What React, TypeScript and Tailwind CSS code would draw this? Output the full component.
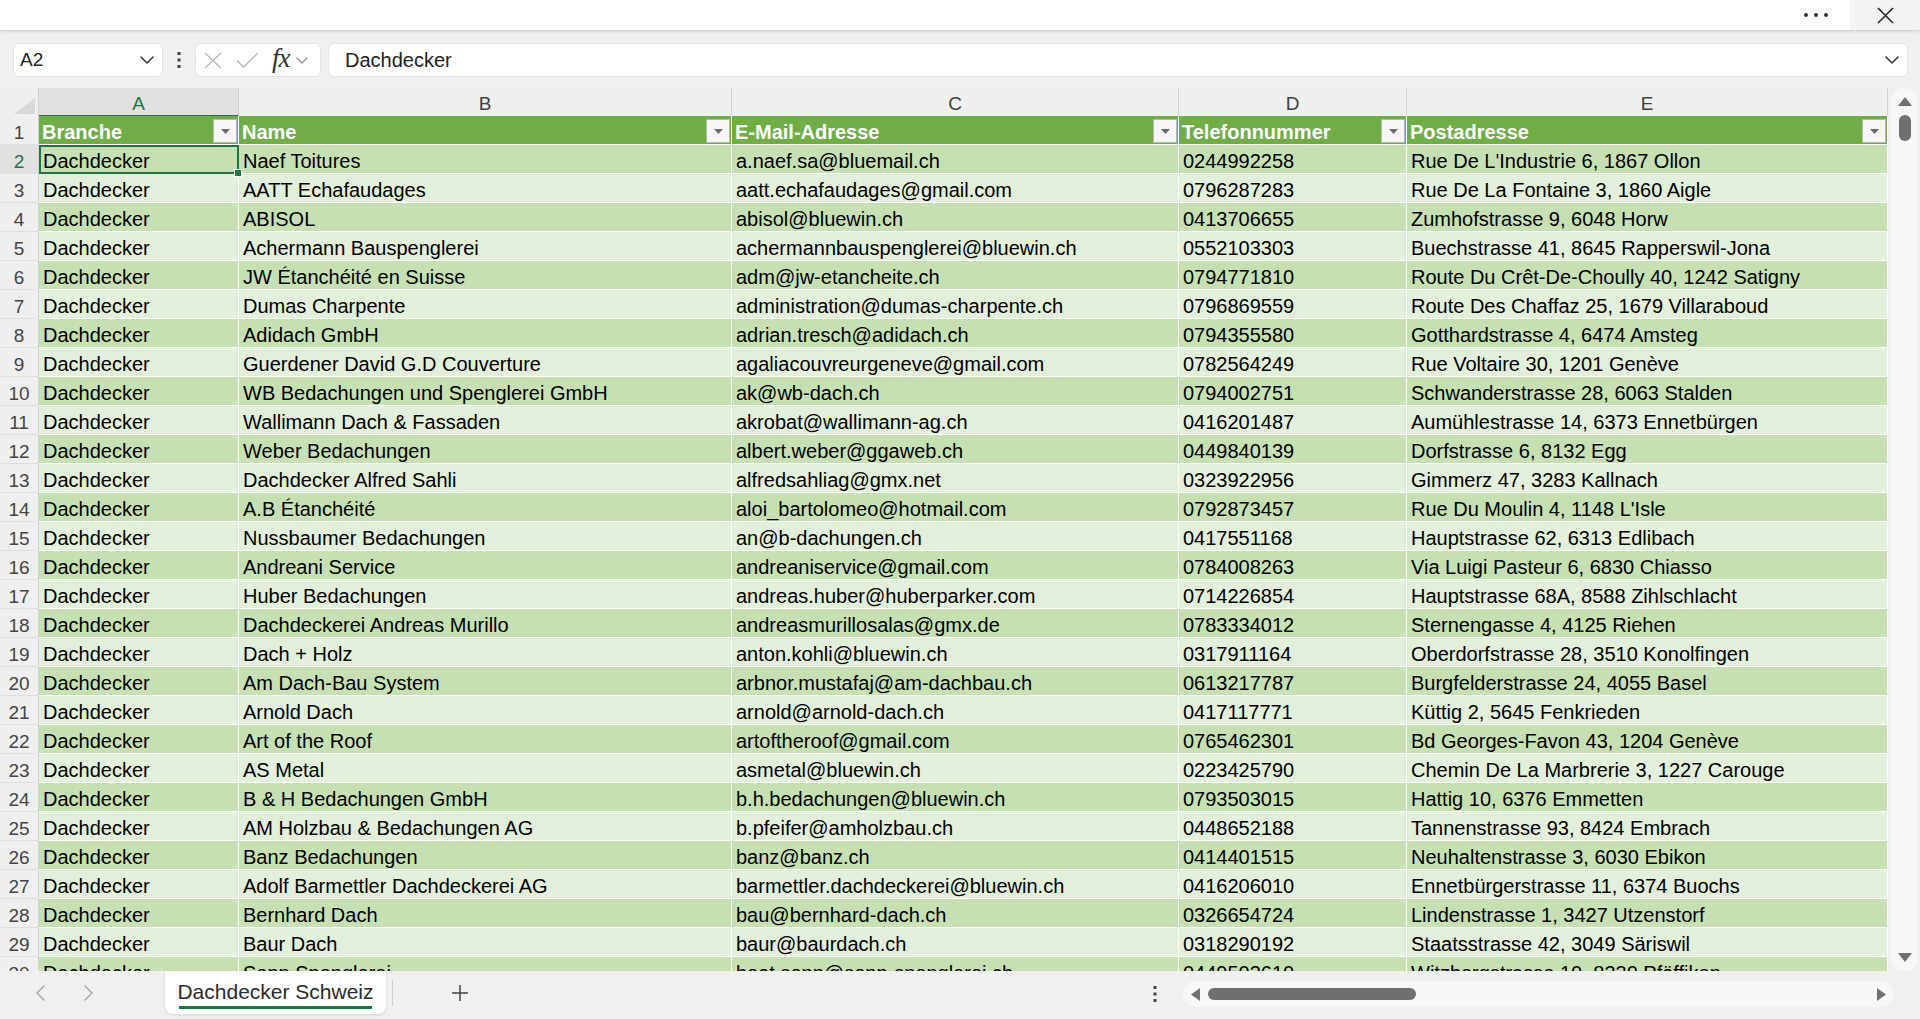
import React from "react";

type Entry = [string, string, string, string];

const ENTRIES: Entry[] = [
  ["Naef Toitures", "a.naef.sa@bluemail.ch", "0244992258", "Rue De L'Industrie 6, 1867 Ollon"],
  ["AATT Echafaudages", "aatt.echafaudages@gmail.com", "0796287283", "Rue De La Fontaine 3, 1860 Aigle"],
  ["ABISOL", "abisol@bluewin.ch", "0413706655", "Zumhofstrasse 9, 6048 Horw"],
  ["Achermann Bauspenglerei", "achermannbauspenglerei@bluewin.ch", "0552103303", "Buechstrasse 41, 8645 Rapperswil-Jona"],
  ["JW Étanchéité en Suisse", "adm@jw-etancheite.ch", "0794771810", "Route Du Crêt-De-Choully 40, 1242 Satigny"],
  ["Dumas Charpente", "administration@dumas-charpente.ch", "0796869559", "Route Des Chaffaz 25, 1679 Villaraboud"],
  ["Adidach GmbH", "adrian.tresch@adidach.ch", "0794355580", "Gotthardstrasse 4, 6474 Amsteg"],
  ["Guerdener David G.D Couverture", "agaliacouvreurgeneve@gmail.com", "0782564249", "Rue Voltaire 30, 1201 Genève"],
  ["WB Bedachungen und Spenglerei GmbH", "ak@wb-dach.ch", "0794002751", "Schwanderstrasse 28, 6063 Stalden"],
  ["Wallimann Dach & Fassaden", "akrobat@wallimann-ag.ch", "0416201487", "Aumühlestrasse 14, 6373 Ennetbürgen"],
  ["Weber Bedachungen", "albert.weber@ggaweb.ch", "0449840139", "Dorfstrasse 6, 8132 Egg"],
  ["Dachdecker Alfred Sahli", "alfredsahliag@gmx.net", "0323922956", "Gimmerz 47, 3283 Kallnach"],
  ["A.B Étanchéité", "aloi_bartolomeo@hotmail.com", "0792873457", "Rue Du Moulin 4, 1148 L'Isle"],
  ["Nussbaumer Bedachungen", "an@b-dachungen.ch", "0417551168", "Hauptstrasse 62, 6313 Edlibach"],
  ["Andreani Service", "andreaniservice@gmail.com", "0784008263", "Via Luigi Pasteur 6, 6830 Chiasso"],
  ["Huber Bedachungen", "andreas.huber@huberparker.com", "0714226854", "Hauptstrasse 68A, 8588 Zihlschlacht"],
  ["Dachdeckerei Andreas Murillo", "andreasmurillosalas@gmx.de", "0783334012", "Sternengasse 4, 4125 Riehen"],
  ["Dach + Holz", "anton.kohli@bluewin.ch", "0317911164", "Oberdorfstrasse 28, 3510 Konolfingen"],
  ["Am Dach-Bau System", "arbnor.mustafaj@am-dachbau.ch", "0613217787", "Burgfelderstrasse 24, 4055 Basel"],
  ["Arnold Dach", "arnold@arnold-dach.ch", "0417117771", "Küttig 2, 5645 Fenkrieden"],
  ["Art of the Roof", "artoftheroof@gmail.com", "0765462301", "Bd Georges-Favon 43, 1204 Genève"],
  ["AS Metal", "asmetal@bluewin.ch", "0223425790", "Chemin De La Marbrerie 3, 1227 Carouge"],
  ["B & H Bedachungen GmbH", "b.h.bedachungen@bluewin.ch", "0793503015", "Hattig 10, 6376 Emmetten"],
  ["AM Holzbau & Bedachungen AG", "b.pfeifer@amholzbau.ch", "0448652188", "Tannenstrasse 93, 8424 Embrach"],
  ["Banz Bedachungen", "banz@banz.ch", "0414401515", "Neuhaltenstrasse 3, 6030 Ebikon"],
  ["Adolf Barmettler Dachdeckerei AG", "barmettler.dachdeckerei@bluewin.ch", "0416206010", "Ennetbürgerstrasse 11, 6374 Buochs"],
  ["Bernhard Dach", "bau@bernhard-dach.ch", "0326654724", "Lindenstrasse 1, 3427 Utzenstorf"],
  ["Baur Dach", "baur@baurdach.ch", "0318290192", "Staatsstrasse 42, 3049 Säriswil"],
  ["Sepp Spenglerei", "beat.sepp@sepp-spenglerei.ch", "0449503610", "Witzbergstrasse 10, 8330 Pfäffikon"],
];

const COLS = "grid grid-cols-[39px_200px_493px_447px_228px_481px]";

function Chevron({ w = 14, h = 8, color = "#333" }: { w?: number; h?: number; color?: string }) {
  return (
    <svg width={w} height={h} viewBox={`0 0 ${w} ${h}`} fill="none">
      <path d={`M1 1L${w / 2} ${h - 1}L${w - 1} 1`} stroke={color} strokeWidth="1.5" strokeLinecap="round" strokeLinejoin="round" />
    </svg>
  );
}

function TitleBar() {
  return (
    <div className="relative z-10 h-[30px] shrink-0 bg-white shadow-[0_1px_3px_rgba(0,0,0,0.18)] flex justify-end">
      <div className="w-[40px] flex items-center justify-center mr-[14px]">
        <svg width="26" height="6" viewBox="0 0 26 6">
          <circle cx="3" cy="3" r="2" fill="#333" />
          <circle cx="13" cy="3" r="2" fill="#333" />
          <circle cx="23" cy="3" r="2" fill="#333" />
        </svg>
      </div>
      <div className="w-[70px] bg-[#f3f3f3] flex items-center justify-center">
        <svg width="17" height="17" viewBox="0 0 17 17" fill="none">
          <path d="M1 1L16 16M16 1L1 16" stroke="#222" strokeWidth="1.5" />
        </svg>
      </div>
    </div>
  );
}

function FormulaBar() {
  return (
    <div className="mt-[13px] h-[34px] shrink-0 flex items-center pl-[13px]">
      <div className="w-[150px] h-[34px] bg-white rounded-[6px] border border-[#e3e3e3] flex items-center justify-between pl-[6px] pr-[8px]">
        <span className="text-[19px] text-[#222]">A2</span>
        <Chevron />
      </div>
      <div className="w-[32px] flex justify-center">
        <svg width="4" height="16" viewBox="0 0 4 16">
          <rect x="0.5" y="0" width="3" height="3" fill="#444" />
          <rect x="0.5" y="6.5" width="3" height="3" fill="#444" />
          <rect x="0.5" y="13" width="3" height="3" fill="#444" />
        </svg>
      </div>
      <div className="w-[126px] h-[34px] bg-white rounded-[6px] border border-[#e3e3e3] flex items-center pl-[8px]">
        <svg width="18" height="17" viewBox="0 0 18 17" fill="none">
          <path d="M1 1L17 16M17 1L1 16" stroke="#b9b9b9" strokeWidth="1.4" />
        </svg>
        <svg className="ml-[14px]" width="23" height="16" viewBox="0 0 23 16" fill="none">
          <path d="M1 8.5L7.5 15L22 1" stroke="#b9b9b9" strokeWidth="1.4" />
        </svg>
        <span className="ml-[13px] font-['Liberation_Serif',serif] italic text-[27px] leading-none text-[#333] tracking-[-1px] -mt-[3px]">fx</span>
        <span className="ml-[6px]">
          <Chevron w={12} h={7} color="#9a9a9a" />
        </span>
      </div>
      <div className="ml-[7px] w-[1580px] h-[34px] bg-white rounded-[6px] border border-[#e3e3e3] flex items-center justify-between pl-[16px] pr-[8px]">
        <span className="text-[20px] text-[#222]">Dachdecker</span>
        <Chevron />
      </div>
    </div>
  );
}

function ColumnLetters() {
  const letters = ["A", "B", "C", "D", "E"];
  return (
    <div className={`${COLS} h-[28px] shrink-0`}>
      <div className="bg-[#efefef] border-r border-b border-[#d2d2d2] flex items-end justify-end pr-[3px] pb-[2px]">
        <svg width="21" height="16" viewBox="0 0 21 16">
          <path d="M21 0V16H0Z" fill="#d8d8d8" />
        </svg>
      </div>
      {letters.map((l, i) =>
        i === 0 ? (
          <div
            key={l}
            className="bg-[#e1e1e1] border-r border-r-[#d2d2d2] border-b-2 border-b-[#217346] text-[#217346] text-center text-[19px] leading-[22px] pt-[5px]"
          >
            {l}
          </div>
        ) : (
          <div
            key={l}
            className="bg-[#efefef] border-r border-b border-[#d2d2d2] text-[#404040] text-center text-[19px] leading-[22px] pt-[5px]"
          >
            {l}
          </div>
        )
      )}
    </div>
  );
}

function FilterButton() {
  return (
    <span className="ml-auto mt-[3px] mr-[1px] w-[24px] h-[24px] shrink-0 bg-[#f6f6f6] border border-[#b7b7b7] flex items-center justify-center">
      <svg width="9" height="5" viewBox="0 0 9 5">
        <path d="M0 0H9L4.5 5Z" fill="#6a6a6a" />
      </svg>
    </span>
  );
}

function RowNumber({ n, active }: { n: number; active?: boolean }) {
  return (
    <div
      className={`border-r border-r-[#d2d2d2] border-b border-b-[#dedede] text-center text-[19px] leading-[22px] pt-[6px] ${
        active ? "bg-[#e1e1e1] text-[#217346]" : "bg-[#efefef] text-[#444]"
      }`}
    >
      {n}
    </div>
  );
}

function TableHeader() {
  const titles = ["Branche", "Name", "E-Mail-Adresse", "Telefonnummer", "Postadresse"];
  return (
    <div className={`${COLS} h-[29px] shrink-0`}>
      <RowNumber n={1} />
      {titles.map((t) => (
        <div key={t} className="bg-[#70ad47] border-r border-b border-white flex items-start pl-[3px] overflow-hidden">
          <span className="mt-[5px] leading-[22px] text-[20px] font-bold text-white whitespace-nowrap">{t}</span>
          <FilterButton />
        </div>
      ))}
    </div>
  );
}

function DataRow({ entry, index }: { entry: Entry; index: number }) {
  const n = index + 2;
  const band = index % 2 === 0 ? "bg-[#c6e0b4]" : "bg-[#e2efda]";
  const cell = `${band} border-r border-b border-white pl-[4px] pt-[5px] leading-[22px] text-[20px] text-black whitespace-nowrap overflow-hidden`;
  const selected = index === 0;
  return (
    <div className={`${COLS} h-[29px] shrink-0`}>
      <RowNumber n={n} active={selected} />
      <div className={`${cell} ${selected ? "relative overflow-visible" : ""}`}>
        Dachdecker
        {selected && (
          <span className="absolute left-0 top-0 -right-[1px] -bottom-[1px] border-2 border-[#217346] pointer-events-none">
            <span className="absolute -right-[5px] -bottom-[5px] w-[8px] h-[8px] bg-[#217346] border border-white" />
          </span>
        )}
      </div>
      <div className={cell}>{entry[0]}</div>
      <div className={cell}>{entry[1]}</div>
      <div className={cell}>{entry[2]}</div>
      <div className={cell}>{entry[3]}</div>
    </div>
  );
}

function VerticalScrollbar() {
  return (
    <div className="ml-[3px] w-[27px] h-full bg-[#f7f7f7] rounded-[13px] flex flex-col items-center pt-[9px] pb-[9px]">
      <svg width="14" height="9" viewBox="0 0 14 9">
        <path d="M7 0L14 9H0Z" fill="#707070" />
      </svg>
      <div className="mt-[9px] w-[12px] h-[26px] rounded-full bg-[#6f6f6f]" />
      <div className="flex-1" />
      <svg width="14" height="9" viewBox="0 0 14 9">
        <path d="M0 0H14L7 9Z" fill="#707070" />
      </svg>
    </div>
  );
}

function BottomBar() {
  return (
    <div className="h-[48px] shrink-0 flex items-start">
      <div className="w-[165px] h-[44px] flex items-center pl-[36px]">
        <svg width="9" height="16" viewBox="0 0 9 16" fill="none">
          <path d="M8 1L1 8L8 15" stroke="#a9a9a9" strokeWidth="1.5" strokeLinecap="round" strokeLinejoin="round" />
        </svg>
        <svg className="ml-[39px]" width="9" height="16" viewBox="0 0 9 16" fill="none">
          <path d="M1 1L8 8L1 15" stroke="#a9a9a9" strokeWidth="1.5" strokeLinecap="round" strokeLinejoin="round" />
        </svg>
      </div>
      <div className="w-[221px] h-[43px] bg-white rounded-b-[8px] shadow-[0_1px_3px_rgba(0,0,0,0.12)] flex flex-col items-center pt-[9px]">
        <span className="text-[21px] leading-[24px] text-[#2b2b2b] whitespace-nowrap">Dachdecker Schweiz</span>
        <span className="mt-[2px] w-[193px] h-[3px] bg-[#107c41]" />
      </div>
      <div className="ml-[6px] mt-[9px] w-px h-[26px] bg-[#d0d0d0]" />
      <div className="ml-[58px] h-[44px] flex items-center">
        <svg width="18" height="18" viewBox="0 0 18 18" fill="none">
          <path d="M9 1V17M1 9H17" stroke="#444" strokeWidth="1.5" />
        </svg>
      </div>
      <div className="ml-[684px] h-[48px] flex items-center pb-[2px]">
        <svg width="4" height="16" viewBox="0 0 4 16">
          <rect x="0.5" y="0" width="3" height="3" fill="#444" />
          <rect x="0.5" y="6.5" width="3" height="3" fill="#444" />
          <rect x="0.5" y="13" width="3" height="3" fill="#444" />
        </svg>
      </div>
      <div className="ml-[26px] mt-[10px] w-[710px] h-[26px] bg-[#f7f7f7] rounded-full flex items-center pl-[8px] pr-[7px]">
        <svg width="9" height="13" viewBox="0 0 9 13">
          <path d="M9 0V13L0 6.5Z" fill="#707070" />
        </svg>
        <div className="ml-[8px] w-[208px] h-[12px] rounded-full bg-[#6f6f6f]" />
        <div className="flex-1" />
        <svg width="9" height="13" viewBox="0 0 9 13">
          <path d="M0 0V13L9 6.5Z" fill="#707070" />
        </svg>
      </div>
    </div>
  );
}

export default function App() {
  return (
    <div className="w-[1920px] h-[1019px] bg-[#f0f0f0] flex flex-col overflow-hidden font-['Liberation_Sans',Arial,sans-serif]">
      <TitleBar />
      <FormulaBar />
      <div className="mt-[11px] h-[883px] shrink-0 flex">
        <div className="w-[1888px] h-full overflow-hidden flex flex-col">
          <ColumnLetters />
          <TableHeader />
          {ENTRIES.map((e, i) => (
            <DataRow key={e[1]} entry={e} index={i} />
          ))}
        </div>
        <VerticalScrollbar />
      </div>
      <BottomBar />
    </div>
  );
}
